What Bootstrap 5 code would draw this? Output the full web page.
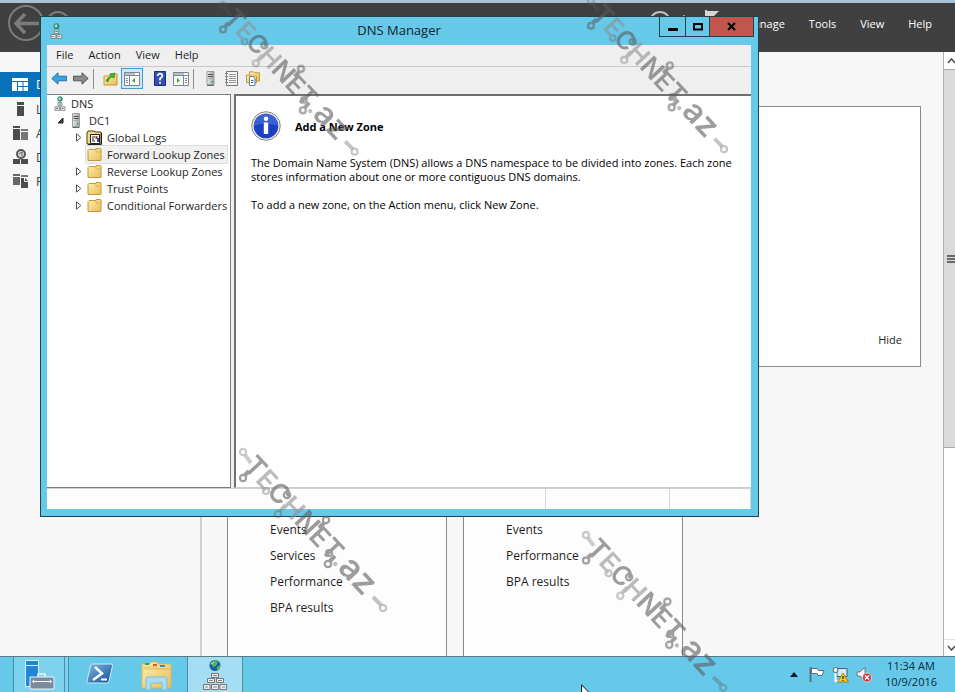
<!DOCTYPE html>
<html lang="en">
<head>
<meta charset="utf-8">
<meta name="viewport" content="width=device-width, initial-scale=1">
<title>DNS Manager</title>
<link rel="stylesheet" href="https://cdn.jsdelivr.net/npm/bootstrap@5.3.0/dist/css/bootstrap.min.css">
<style>
:root { --sky: #66c9ea; --ink: #1e1e1e; }
body { font-family: "Open Sans", "Noto Sans", sans-serif; font-size: 11px; line-height: 17px; color: var(--ink); background: #f7f7f7; }
svg { display: block; flex: none; }
button, a { color: inherit; text-decoration: none; font: inherit; }
button { border: 0; background: none; padding: 0; }
.desk { overflow: hidden; }

.sm-head { height: 52px; background: #404040; border-top: 3px solid #a9c3d4; color: #fff; padding: 0 23px 0 7px; }
.sm-menu { gap: 24px; font-size: 11px; padding-top: 12px; }
.sm-side { width: 202px; border-right: 2px solid #d0d0d0; padding-top: 20px; font-size: 12px; }
.sm-side a { height: 24px; padding-left: 11px; gap: 7px; color: #444; white-space: nowrap; overflow: hidden; }
.sm-side a.on { height: 25px; background: #0a72ba; color: #fff; }
.sm-main { padding: 54px 22px 0 25px; }
.welcome { height: 261px; background: #fff; border: 1px solid #8c8c8c; padding: 0 18px 18px 0; }
.tiles { gap: 16px; margin-top: 29px; }
.tile { width: 220px; background: #fdfdfd; border: 1px solid #8c8c8c; border-bottom: 0; padding: 120px 0 0 42px; font-size: 12px; }
.tile a { line-height: 26px; }
.sm-scroll { width: 12px; border-left: 1px solid #b0b0b0; background: #fff; overflow: hidden; }
.sm-scroll button { height: 17px; width: 14px; }
.sm-thumb { height: 379px; width: 14px; background: #dadada; border: 1px solid #a9a9a9; border-left: 0; }

.mmc { inset: 16px 196px 175px 40px; background: var(--sky); border: 1px solid #24424e; padding: 0 7px 7px 6px; }
.mmc-title { height: 28px; }
.mmc-title h1 { font-size: 13px; line-height: 27px; color: #10242c; }
.caps button { height: 20px; border: 1px solid #24424e; border-top: 0; }
.caps button + button { border-left: 0; }
.cap-min { width: 27px; }
.cap-max { width: 24px; }
.cap-close { width: 44px; background: #c2564c; }
.mmc-icon { left: 9px; top: 6px; }
.mmc-caps { right: 4px; top: 0; }
.menus { height: 22px; background: #efefef; border-bottom: 1px solid #c9c9c9; padding: 0 9px 2px; gap: 15px; }
.tools { height: 27px; background: #efefef; padding: 0 2px 4px; }
.tools button { width: 21px; height: 21px; display: grid; place-items: center; }
.tools button.pressed { background: #cfe8f6; border: 1px solid #3f9ccb; width: 22px; }
.tools i { width: 1px; height: 20px; background: #8e8e8e; margin: 0 2px; }
.tools .gap-before { margin-left: 6px; }
.panes { background: #efefef; gap: 3px; }
.tree { width: 184px; background: #fff; border: 1px solid #7d7d7d; border-left: 0; padding-left: 6px; }
.tree button { height: 17px; padding-right: 2px; white-space: nowrap; gap: 4px; line-height: 15px; }
.tree button.chosen { background: #f1f1f1; box-shadow: 0 0 0 1px #dedede; }
.tree .twist { width: 14px; flex: none; }
.lv2 { padding-left: 19px; }
.detail { background: #fff; border-left: 2px solid #707070; border-top: 2px solid #707070; border-bottom: 1px solid #ccc; padding: 14px 15px; line-height: 14px; color: #000; }
.detail h2 { font-size: 11px; font-weight: 700; }
.detail-head { gap: 14px; margin-bottom: 14px; }
.detail p { margin-bottom: 14px; }
.statusbar { height: 21px; background: #fdfdfd; border-top: 1px solid #d0d0d0; }
.statusbar div { border-right: 1px solid #d7d7d7; }
.st-b { width: 124px; }
.st-c { width: 81px; }

.taskbar { height: 36px; background: var(--sky); border-top: 1px solid #5b7a88; color: #0b2a36; overflow: hidden; }
.task { height: 36px; display: grid; place-items: start center; padding-top: 2px; }
.task-sm { width: 52px; margin-left: 13px; background: #7dd2ee; border: solid #4c8ca8; border-width: 0 1px; }
.task-more { width: 4px; height: 36px; background: #7dd2ee; border-right: 1px solid #4c8ca8; }
.task-dns { width: 56px; margin-left: 14px; background: #a5def3; border: solid #4c8ca8; border-width: 0 1px; }
.clock { font-size: 11px; line-height: 16px; width: 56px; white-space: nowrap; padding-bottom: 2px; }
.tray { gap: 7px; padding-right: 16px; }

.stamps { inset: 0; pointer-events: none; }
.stamp-text { font-family: "Inter", "Liberation Sans", sans-serif; font-weight: 600; }
.pointer { left: 581px; top: 684px; }
</style>
<script src="https://cdn.jsdelivr.net/npm/bootstrap@5.3.0/dist/js/bootstrap.bundle.min.js" defer></script>
</head>
<body>
<svg width="0" height="0" class="position-absolute" aria-hidden="true">
  <defs>
    <linearGradient id="gFold" x1="0" y1="0" x2="1" y2="1"><stop offset="0" stop-color="#fdeeb0"/><stop offset="1" stop-color="#e8bf55"/></linearGradient>
    <linearGradient id="gPs" x1="0" y1="0" x2="1" y2="1"><stop offset="0" stop-color="#7fb9e2"/><stop offset="1" stop-color="#124f94"/></linearGradient>
    <linearGradient id="gTower" x1="0" y1="0" x2="1" y2="0"><stop offset="0" stop-color="#e9ebec"/><stop offset="1" stop-color="#9fa4a6"/></linearGradient>
    <symbol id="folder" viewBox="0 0 14 13"><path d="M.5 12.500V2.500l1-1H8.500V.5h4.500l.5.5v11.500z" fill="url(#gFold)" stroke="#c49a3c"/><path d="M8.500 1.500v2.500h5" fill="none" stroke="#d9b25a"/></symbol>
    <symbol id="dns" viewBox="0 0 11 15"><circle cx="5.500" cy="3" r="2.700" fill="#2d8f7c"/><path d="M3.500 2.500l2-1.500 1 2-1.500 1.500z" fill="#a9e3c4"/><g fill="#f3f3f3" stroke="#777" stroke-width=".8"><path d="M3.500 6.500h4v3.200h-4z"/><path d="M.5 10.800h4.500v3.600H.5zM6 10.800h4.500v3.600H6z"/></g><path d="M4.500 8h2M1.500 12.500h2M7 12.500h2" stroke="#555" stroke-width=".8"/></symbol>
    <symbol id="tower" viewBox="0 0 9 15"><path d="M1 .5h7v13H1z" fill="url(#gTower)" stroke="#9a9fa1"/><path d="M2 3.500h5M2 5.500h5" stroke="#555"/><path d="M2 7.500h5" stroke="#aaa"/><path d="M5.500 10h1.500v2h-1.500z" fill="#5aa05a"/><path d="M1 14.500h7" stroke="#666"/></symbol>
    <symbol id="closed" viewBox="0 0 6 9"><path d="M.5.800v7.400L4.800 4.500z" fill="#fff" stroke="#555"/></symbol>
    <g id="stamp">
      <g fill="none" stroke="#5c5c5c" stroke-width="2.200">
        <circle cx="0" cy="0" r="3.100" opacity=".55"/><path d="M2 3l6 8" stroke-width="4" opacity=".5"/>
        <circle cx="0" cy="26" r="3.100"/><path d="M2 23l4-4" stroke-width="4"/>
        <circle cx="23" cy="39" r="3" opacity=".6"/>
        <circle cx="44" cy="43" r="3.200"/>
        <circle cx="35" cy="62" r="3.200" opacity=".6"/><path d="M37 59l5-6" stroke-width="3.500" opacity=".6"/>
        <circle cx="83" cy="68" r="3.200"/><path d="M81 71l-5 5" stroke-width="4"/>
        <circle cx="86" cy="101" r="3"/><circle cx="85" cy="112" r="3.200"/><path d="M87 109l5-5" stroke-width="4"/>
        <circle cx="140" cy="156" r="3.200" opacity=".6"/><path d="M138 153l-8-8" stroke-width="4" opacity=".6"/>
      </g>
      <text class="stamp-text" transform="translate(-1 15) rotate(47)" fill="#5c5c5c" font-size="28">T<tspan font-size="27" fill="#8f8f8f">E</tspan><tspan font-size="27">C</tspan><tspan font-size="27" fill="#8f8f8f">H</tspan>N<tspan font-size="27">E</tspan>T<tspan fill="#8f8f8f">.</tspan><tspan font-size="34">a</tspan><tspan font-size="34">z</tspan></text>
    </g>
  </defs>
</svg>

<div class="desk position-relative d-flex flex-column vh-100">
  <header class="sm-head d-flex justify-content-between">
    <svg width="64" height="44" viewBox="0 0 64 44" fill="none" stroke="#7b7b7b" stroke-width="2"><circle cx="19" cy="20" r="17"/><path d="M9 20.500h23M18 11l-9 9.500 9 9.500" stroke-width="3.500"/><circle cx="51" cy="20" r="11"/></svg>
    <nav class="sm-menu d-flex" aria-label="Server Manager">
      <svg width="70" height="22" viewBox="0 0 70 22" class="me-1" overflow="visible" fill="none" stroke="#bdbdbd"><circle cx="14" cy="7" r="10" stroke-width="2"/><path d="M38 0v3" stroke="#fff"/><path d="M59-4h14l-5 5h-9z" fill="#d5d5d5" stroke="none"/><path d="M60-5v20" stroke="#d5d5d5" stroke-width="2"/></svg>
      <a href="#">Manage</a><a href="#">Tools</a><a href="#">View</a><a href="#">Help</a>
    </nav>
  </header>

  <div class="d-flex flex-fill overflow-hidden">
    <nav class="sm-side flex-shrink-0" aria-label="Dashboard views">
      <a href="#" aria-label="Dashboard" class="on d-flex align-items-center"><svg width="18" height="15" viewBox="0 0 18 15"><path d="M1 1h16v13H1z" fill="#fff"/><path d="M1 4.500h16M6.500 4.500V14M12 4.500V14M6.500 9.500H17" stroke="#0a72ba"/></svg>D</a>
      <a href="#" aria-label="Local Server" class="d-flex align-items-center"><svg width="18" height="16" viewBox="0 0 18 16"><path d="M6 1h7v3H6zM6 5h7v10H6z" fill="#4c4c4c"/></svg>L</a>
      <a href="#" aria-label="All Servers" class="d-flex align-items-center"><svg width="18" height="16" viewBox="0 0 18 16"><path d="M2 1h7v2H2zM2 4h7v11H2z" fill="#4c4c4c"/><path d="M10 4h7v2h-7zM10 7h7v8h-7z" fill="#777"/></svg>A</a>
      <a href="#" aria-label="DNS" class="d-flex align-items-center"><svg width="18" height="16" viewBox="0 0 18 16"><circle cx="10" cy="5" r="4" fill="#ddd" stroke="#555" stroke-width="2"/><path d="M8 5l3-2v4M10 9v2" stroke="#555" fill="none"/><path d="M2 10h7v5H2zM10 10h7v5h-7z" fill="#4c4c4c"/></svg>D</a>
      <a href="#" aria-label="File and Storage Services" class="d-flex align-items-center"><svg width="18" height="16" viewBox="0 0 18 16"><path d="M2 1h7v2H2zM2 4h7v8H2z" fill="#666"/><path d="M10 2h7v2h-7z" fill="#777"/><path d="M10 5h4l3 3v7h-7z" fill="#4c4c4c"/><path d="M13.500 5v3.500H17" stroke="#f7f7f7" fill="none"/></svg>F</a>
    </nav>
    <main class="sm-main flex-fill d-flex flex-column">
      <section class="welcome flex-shrink-0 d-flex justify-content-end align-items-end"><a href="#">Hide</a></section>
      <div class="tiles d-flex flex-fill">
        <section class="tile d-flex flex-column"><a href="#">Events</a><a href="#">Services</a><a href="#">Performance</a><a href="#">BPA results</a></section>
        <section class="tile d-flex flex-column"><a href="#">Events</a><a href="#">Performance</a><a href="#">BPA results</a></section>
      </div>
    </main>
    <div class="sm-scroll flex-shrink-0 d-flex flex-column">
      <button type="button" aria-label="Scroll up" class="d-grid align-items-center"><svg width="14" height="8" viewBox="0 0 14 8" fill="none" stroke="#555" stroke-width="1.500"><path d="M4 6l3.500-4L11 6"/></svg></button>
      <div class="sm-thumb d-flex align-items-center"><svg width="14" height="10" viewBox="0 0 14 10" stroke="#444" stroke-width="1.500"><path d="M3 2h8M3 5h8M3 8h8"/></svg></div>
      <button type="button" aria-label="Scroll down" class="mt-auto d-grid align-items-center border-top"><svg width="14" height="8" viewBox="0 0 14 8" fill="none" stroke="#555" stroke-width="1.500"><path d="M4 2l3.500 4L11 2"/></svg></button>
    </div>
  </div>

  <footer class="taskbar d-flex flex-shrink-0">
    <button type="button" class="task task-sm" aria-label="Server Manager"><svg width="31" height="32" viewBox="0 0 31 32"><path d="M1.500 1.500h13v26h-13z" fill="#1f86d8" stroke="#d6f0fb"/><path d="M1.500 6.500h13" stroke="#d6f0fb"/><path d="M6 18h24v12H6z" fill="#7c8b9b" stroke="#e6f5fb"/><path d="M14 18v-3h7v3" fill="none" stroke="#e6f5fb" stroke-width="1.500"/><path d="M8 22.500h20" stroke="#fff"/><path d="M9 20.500l2 2-2 2zM27 20.500l-2 2 2 2z" fill="#fff"/></svg></button>
    <span class="task-more"></span>
    <button type="button" class="task ms-3 px-0" aria-label="PowerShell"><svg width="30" height="28" viewBox="0 0 30 28"><path d="M7 5h19q2 0 1.500 2L24 22q-.5 2-2.500 2H3.500q-2 0-1.500-2L5.500 7Q6 5 7 5z" fill="url(#gPs)" stroke="#cfe8f7"/><path d="M10 8l7 6.500L8 21" fill="none" stroke="#fff" stroke-width="2.400"/><path d="M16 20.500h6" stroke="#fff" stroke-width="2"/></svg></button>
    <button type="button" class="task ms-4" aria-label="File Explorer"><svg width="34" height="33" viewBox="0 0 34 33"><path d="M3 29V5h8l1-2h6l1 2h12q1 0 1 1v23z" fill="url(#gFold)" stroke="#d9b862"/><path d="M4 10h27M4 8h13l1 2h13" fill="none" stroke="#dfbf6c"/><path d="M6 4h4v2H6z" fill="#3d9e42"/><path d="M14 5h4v2h-4z" fill="#d85b33"/><path d="M21 6h5v2h-5z" fill="#4688c4"/><path d="M7 31V20q0-2 2-2h17q2 0 2 2v11h-5v-7H12v7z" fill="#a9dcf0" stroke="#7fbfdb"/></svg></button>
    <button type="button" class="task task-dns" aria-label="DNS Manager"><svg width="26" height="32" viewBox="0 0 26 32"><circle cx="13" cy="6.500" r="5.500" fill="#1c5fa8"/><path d="M9 4l4-3 3 2-2 4-3 1zM15 8l3-2v3l-3 3z" fill="#54b45a"/><path d="M9 5l3-2" stroke="#d9f4e0"/><g fill="#ececec" stroke="#777"><path d="M9.500 14.500h7v4h-7zM5.500 19.500h7v4h-7zM14.500 19.500h7v4h-7zM1.500 25.500h6.500v5H1.500zM9.500 25.500h7v5h-7zM18 25.500h6.500v5H18z"/></g><path d="M11 16.500h4M7 21.500h4M16 21.500h4M3 28h3M11 28h4M20 28h3" stroke="#888"/></svg></button>
    <div class="tray d-flex align-items-center ms-auto">
      <button type="button" class="me-1" aria-label="Show hidden icons"><svg width="8" height="5" viewBox="0 0 8 5"><path d="M0 5l4-5 4 5z" fill="#0b1f28"/></svg></button>
      <svg width="16" height="17" viewBox="0 0 16 17"><path d="M1.500 1v15" stroke="#5b6d78" stroke-width="2"/><path d="M2.500 2.500h6l1 2h5.500l-2 5H9l-1-2H2.500z" fill="#fff" stroke="#5b6d78"/></svg>
      <svg width="17" height="17" viewBox="0 0 17 17"><path d="M5 2.500h10v8H5z" fill="#d5ecf5" stroke="#43606e"/><circle cx="3.500" cy="4" r="2.500" fill="#fff" stroke="#43606e"/><path d="M3.500 7v8h5" fill="none" stroke="#fff" stroke-width="2"/><path d="M11 7l5.500 9h-11z" fill="#f6c928" stroke="#9c7407" stroke-width=".8"/><path d="M11 10v3M11 14v1" stroke="#222" stroke-width="1.200"/></svg>
      <svg width="16" height="17" viewBox="0 0 16 17"><path d="M1 6h3l5-5v14l-5-5H1z" fill="#f4f4f4" stroke="#6c7b84"/><circle cx="11" cy="11.500" r="4.500" fill="#d8343a" stroke="#fff" stroke-width=".6"/><path d="M9 9.500l4 4M13 9.500l-4 4" stroke="#fff" stroke-width="1.500"/></svg>
      <div class="clock text-center ms-1"><div>11:34 AM</div><div>10/9/2016</div></div>
    </div>
  </footer>

  <section class="mmc position-absolute d-flex flex-column" aria-label="DNS Manager">
    <div class="mmc-title">
      <svg class="mmc-icon position-absolute" width="13" height="16"><use href="#dns"/></svg>
      <h1 class="m-0 text-center fw-normal">DNS Manager</h1>
      <div class="caps mmc-caps d-flex position-absolute">
        <button type="button" class="cap-min d-grid align-items-center justify-content-center" aria-label="Minimize"><svg width="12" height="10" viewBox="0 0 12 10"><path d="M1 6h10v3H1z" fill="#000"/></svg></button>
        <button type="button" class="cap-max d-grid align-items-center justify-content-center" aria-label="Maximize"><svg width="10" height="8" viewBox="0 0 10 8"><path d="M1 1h8v5.500H1z" fill="none" stroke="#000" stroke-width="2"/></svg></button>
        <button type="button" class="cap-close d-grid align-items-center justify-content-center" aria-label="Close"><svg width="9" height="9" viewBox="0 0 9 9"><path d="M1 1l7 7M8 1L1 8" stroke="#000" stroke-width="2"/></svg></button>
      </div>
    </div>
    <nav class="menus d-flex align-items-center" aria-label="Menu">
      <button type="button">File</button><button type="button">Action</button><button type="button">View</button><button type="button">Help</button>
    </nav>
    <div class="tools d-flex align-items-center">
      <button type="button" aria-label="Back"><svg width="17" height="13" viewBox="0 0 17 13"><path d="M.8 6.500L7 .8v3.400h8.500v4.600H7v3.400z" fill="#39a5e8" stroke="#2a6fa8"/></svg></button>
      <button type="button" aria-label="Forward"><svg width="17" height="13" viewBox="0 0 17 13"><path d="M16.200 6.500L10 .8v3.400H1.500v4.600H10v3.400z" fill="#8b8b8b" stroke="#555"/></svg></button>
      <i></i>
      <button type="button" aria-label="Up" class="ms-1"><svg width="15" height="15" viewBox="0 0 15 15"><path d="M1 14V5h5l1-2h7v11z" fill="url(#gFold)" stroke="#c49a3c"/><path d="M3 10c1-3 3-4 5-5l-1-2 5-1-1 5-2-1c-2 1-3 2-4 5z" fill="#47b52c" stroke="#2b7d1a" stroke-width=".6"/></svg></button>
      <button type="button" aria-label="Show tree" class="pressed"><svg width="16" height="14" viewBox="0 0 16 14"><path d="M.5.500h15v13H.5z" fill="#fafafa" stroke="#7b8794"/><path d="M1 3.500h14M1 2h10" stroke="#7b8794"/><path d="M5.500 4v9M2 6.500h2M2 8.500h2M2 10.500h2" stroke="#7b8794"/><path d="M11 6v5L8 8.500z" fill="#4c9c3c"/></svg></button>
      <button type="button" aria-label="Help" class="gap-before"><svg width="12" height="15" viewBox="0 0 12 15"><path d="M.5.500h11v14H.5z" fill="#3350b8" stroke="#1b2d78"/><path d="M3.700 5q0-2.300 2.300-2.300T8.300 5Q8.300 6.300 6 7.500V9.500M6 11v1.800" stroke="#fff" stroke-width="1.700" fill="none"/></svg></button>
      <button type="button" aria-label="Action pane"><svg width="16" height="14" viewBox="0 0 16 14"><path d="M.5.500h15v13H.5z" fill="#fafafa" stroke="#7b8794"/><path d="M1 3.500h14M1 2h10M10.500 4v9M12 6.500h2M12 8.500h2M12 10.500h2" stroke="#7b8794"/><path d="M4 6v5l3-2.500z" fill="#4c9c3c"/></svg></button>
      <i></i>
      <button type="button" aria-label="Servers" class="ms-1"><svg width="9" height="15"><use href="#tower"/></svg></button>
      <button type="button" aria-label="List"><svg width="13" height="15" viewBox="0 0 13 15"><path d="M1.500.500h11v14h-11z" fill="#f4f4f4" stroke="#777"/><path d="M4 3.500h7M4 5.500h7M4 7.500h7M4 9.500h7M4 11.500h7" stroke="#999"/><path d="M0 2.500h3M0 5.500h3M0 8.500h3M0 11.500h3" stroke="#888"/></svg></button>
      <button type="button" aria-label="New zone"><svg width="14" height="15" viewBox="0 0 14 15"><path d="M3.500 9V.800h4l1 1h5V10h-10z" fill="url(#gFold)" stroke="#c49a3c"/><path d="M.5 11.500V4h4l1 1h5v7z" fill="url(#gFold)" stroke="#c49a3c"/><path d="M3.500 5.500H7l2 2v7H3.500z" fill="#fff" stroke="#5f82b0"/><path d="M5 9.500h2.500M5 11.500h2.500" stroke="#3a68b0"/></svg></button>
    </div>
    <div class="panes d-flex flex-fill">
      <div class="tree flex-shrink-0" role="tree">
        <div class="d-flex"><button type="button" class="d-flex align-items-center"><svg width="14" height="15"><use href="#dns"/></svg>DNS</button></div>
        <div class="d-flex align-items-center"><span class="twist d-flex ps-1"><svg width="7" height="7" viewBox="0 0 7 7"><path d="M6 1v5H1z" fill="#444" stroke="#222"/></svg></span><button type="button" class="d-flex align-items-center ps-1"><svg width="10" height="15" class="me-1"><use href="#tower"/></svg>DC1</button></div>
        <div class="lv2 d-flex align-items-center"><span class="twist d-flex ps-1"><svg width="6" height="9"><use href="#closed"/></svg></span><button type="button" class="d-flex align-items-center"><svg width="17" height="15" viewBox="0 0 17 15"><path d="M1 14V3l1-2h6l1 1h6v12z" fill="#f3d98a" stroke="#4a3d10"/><path d="M4.500 4.500h9v9h-9z" fill="#fff" stroke="#222"/><path d="M6 7h3M6 9h2M6 11h3" stroke="#222"/><path d="M9.500 6h2v3h-2z" fill="#c33"/><path d="M11 8h2v4h-2z" fill="#3344bb"/><path d="M15.500 3v11.500H2" stroke="#222" fill="none"/></svg>Global Logs</button></div>
        <div class="lv2 d-flex align-items-center"><span class="twist"></span><button type="button" class="chosen d-flex align-items-center"><svg width="17" height="13"><use href="#folder"/></svg>Forward Lookup Zones</button></div>
        <div class="lv2 d-flex align-items-center"><span class="twist d-flex ps-1"><svg width="6" height="9"><use href="#closed"/></svg></span><button type="button" class="d-flex align-items-center"><svg width="17" height="13"><use href="#folder"/></svg>Reverse Lookup Zones</button></div>
        <div class="lv2 d-flex align-items-center"><span class="twist d-flex ps-1"><svg width="6" height="9"><use href="#closed"/></svg></span><button type="button" class="d-flex align-items-center"><svg width="17" height="13"><use href="#folder"/></svg>Trust Points</button></div>
        <div class="lv2 d-flex align-items-center"><span class="twist d-flex ps-1"><svg width="6" height="9"><use href="#closed"/></svg></span><button type="button" class="d-flex align-items-center"><svg width="17" height="13"><use href="#folder"/></svg>Conditional Forwarders</button></div>
      </div>
      <div class="detail flex-fill">
        <div class="detail-head d-flex align-items-center">
          <svg width="30" height="32" viewBox="0 0 30 32"><circle cx="15" cy="16" r="14.300" fill="#e8e8e8" stroke="#888"/><circle cx="15" cy="16" r="12.300" fill="#1a3fc0"/><path d="M2.700 16a12.300 12.300 0 0 1 24.600 0q-12-5-24.600 0z" fill="#4a6fdc" opacity=".7"/><circle cx="15" cy="8.800" r="2.300" fill="#fff"/><path d="M12.800 12.500h4.400V24h-4.400z" fill="#fff"/></svg>
          <h2 class="m-0 lh-1">Add a New Zone</h2>
        </div>
        <p>The Domain Name System (DNS) allows a DNS namespace to be divided into zones. Each zone stores information about one or more contiguous DNS domains.</p>
        <p>To add a new zone, on the Action menu, click New Zone.</p>
      </div>
    </div>
    <div class="statusbar d-flex"><div class="flex-fill"></div><div class="st-b"></div><div class="st-c"></div></div>
  </section>

  <svg class="stamps position-absolute w-100 h-100" role="img" aria-label="Technet.az">
    <g opacity=".6"><use href="#stamp" transform="translate(223 5) scale(.94)"/></g>
    <g opacity=".6"><use href="#stamp" transform="translate(591 1) scale(.95)"/></g>
    <g opacity=".6"><use href="#stamp" transform="translate(243 452)"/></g>
    <g opacity=".6"><use href="#stamp" transform="translate(586 535) scale(.98)"/></g>
  </svg>
  <svg class="pointer position-absolute" width="12" height="19" viewBox="0 0 12 19"><path d="M.6.800v15l3.600-3.400L6.500 18l2.200-1-2.300-5.200h4.800z" fill="#fff" stroke="#111"/></svg>
</div>
</body>
</html>
